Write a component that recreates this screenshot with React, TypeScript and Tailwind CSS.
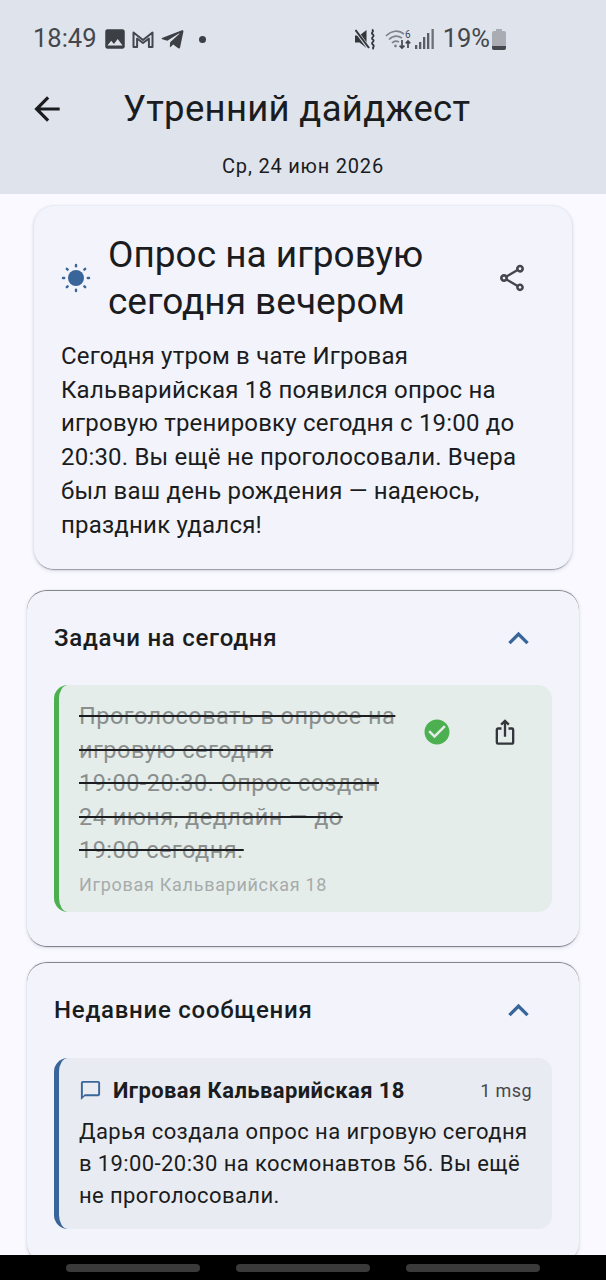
import React from "react";
import { MdArrowBack, MdOutlineShare, MdExpandLess, MdCheckCircle, MdOutlineChatBubbleOutline, MdIosShare, MdImage } from "react-icons/md";
import { FaTelegramPlane } from "react-icons/fa";

function Sun() {
  const dots = [0, 45, 90, 135, 180, 225, 270, 315];
  return (
    <svg width="30" height="30" viewBox="0 0 30 30" className="shrink-0">
      <circle cx="15" cy="15" r="8" fill="#38659a" />
      {dots.map((d) => (
        <rect key={d} x="13.8" y="0.8" width="2.4" height="3.6" rx="1.2" fill="#38659a" transform={`rotate(${d} 15 15)`} />
      ))}
    </svg>
  );
}

function StatusLeft() {
  return (
    <div className="flex items-center">
      <span className="text-[25.5px] leading-none text-[#44474c]">18:49</span>
      <MdImage className="ml-[5px] text-[#3c3f44]" size={26} />
      <svg width="22" height="19" viewBox="0 0 22 19" className="ml-[4px]" fill="none" stroke="#44474c" strokeWidth="2" strokeLinejoin="round">
        <path d="M1.5 17V2.5l9.5 7.5 9.5-7.5V17h-3.6V8.5L11 13 5.1 8.5V17z" />
      </svg>
      <FaTelegramPlane className="ml-[6px] text-[#3c3f44]" size={25} />
      <span className="ml-[14px] w-[7px] h-[7px] rounded-full bg-[#3c3f44]" />
    </div>
  );
}

function StatusRight() {
  return (
    <div className="flex items-center">
      <svg width="21" height="22" viewBox="0 0 21 22" fill="none">
        <path d="M0 7.5h4.5L11.5 2v18l-7-5.5H0z" fill="#33363b" />
        <path d="M0 1.5 14 20.5" stroke="#dfe3ec" strokeWidth="3.5" />
        <path d="M0.5 2 14 20" stroke="#33363b" strokeWidth="2" />
        <path d="M17 1.5c3 2-2 3 .8 5s-2.8 3 0 5-2.8 3 0 5-1.5 3.5 1 4.5" stroke="#33363b" strokeWidth="1.8" />
      </svg>
      <svg width="28" height="22" viewBox="0 0 28 22" fill="none" className="ml-[9px]" stroke="#7f8288" strokeWidth="1.7">
        <path d="M1 8c6-6 13-6 18-2" />
        <path d="M4 11.5c4-4 9-4 13-1.5" />
        <path d="M7 15c2-2 5-2 7-1" />
        <circle cx="10.5" cy="18" r="1.4" fill="#7f8288" stroke="none" />
        <path d="M17 12v8m-2.4-2.4L17 20l2.4-2.4" stroke="#44474c" />
        <path d="M23 20v-7m-2.2 2.3L23 13l2.2 2.3" stroke="#44474c" />
        <text x="20" y="9.5" fontSize="10" fill="#44474c" stroke="none" fontFamily="Roboto, sans-serif">6</text>
      </svg>
      <svg width="19" height="22" viewBox="0 0 19 22" className="ml-[2px]" fill="#5a5d63">
        <rect x="0" y="17" width="2.3" height="4" />
        <rect x="4" y="14" width="2.3" height="7" />
        <rect x="8" y="9" width="2.3" height="12" />
        <rect x="12" y="5" width="2.3" height="16" />
        <rect x="16.5" y="1" width="2.3" height="20" fill="#6e7177" />
      </svg>
      <span className="ml-[9px] text-[25.5px] leading-none text-[#44474c]">19%</span>
      <svg width="14" height="22" viewBox="0 0 14 22" className="ml-[2px]">
        <path d="M4 1h6v2h2a2 2 0 0 1 2 2v15a2 2 0 0 1-2 2H2a2 2 0 0 1-2-2V5a2 2 0 0 1 2-2h2z" fill="#a9acb3" />
        <path d="M0 18h14v2a2 2 0 0 1-2 2H2a2 2 0 0 1-2-2z" fill="#44474c" />
      </svg>
    </div>
  );
}

function SectionCard({ title, children }: { title: string; children: React.ReactNode }) {
  return (
    <section className="mx-[27px] rounded-[20px] bg-[#f2f3fb] border-t border-t-[#85868c] shadow-[0_2px_1px_-1px_rgba(50,50,70,0.6),0_0_2px_rgba(50,50,70,0.14),0_2px_4px_rgba(50,50,70,0.12)] pb-[34px] px-[27px]">
      <div className="h-[94px] flex items-center justify-between">
        <h2 className="text-[24px] font-medium tracking-[0.75px] text-[#1a1c20]">{title}</h2>
        <MdExpandLess size={41} className="text-[#38659a] mr-[13px] mt-[1px]" />
      </div>
      {children}
    </section>
  );
}

export default function App() {
  return (
    <div className="w-[606px] h-[1280px] flex flex-col overflow-hidden bg-[#f9f9ff] font-['Roboto',sans-serif]">
      <header className="h-[194px] shrink-0 bg-[#dfe3ec] flex flex-col">
        <div className="h-[78px] pl-[33px] pr-[100px] flex items-center justify-between">
          <StatusLeft />
          <StatusRight />
        </div>
        <div className="h-[62px] flex items-center pl-[28px]">
          <MdArrowBack size={38} className="text-[#1a1c20]" />
          <h1 className="ml-[57px] text-[36.5px] leading-none tracking-[0.3px] text-[#1a1c20]">Утренний дайджест</h1>
        </div>
        <div className="mt-[12px] text-center text-[20px] leading-[28px] tracking-[0.8px] text-[#1a1c20]">Ср, 24 июн 2026</div>
      </header>

      <main className="flex-1 min-h-0 overflow-hidden flex flex-col pt-[12px]">
        <section className="mx-[34px] rounded-[20px] bg-[#f2f3fb] shadow-[0_2px_1px_-1px_rgba(50,50,70,0.4),0_0_3px_rgba(50,50,70,0.14),0_2px_4px_rgba(50,50,70,0.12)] px-[27px] pt-[25px] h-[363px] shrink-0">
          <div className="flex items-center">
            <Sun />
            <h2 className="ml-[17px] w-[360px] text-[37px] leading-[47px] text-[#1a1c20]">Опрос на игровую сегодня вечером</h2>
            <MdOutlineShare size={32} className="ml-[28px] text-[#44474c]" />
          </div>
          <p className="mt-[15px] text-[24px] leading-[33.7px] tracking-[0.2px] text-[#1a1c20]">
            Сегодня утром в чате Игровая<br />
            Кальварийская 18 появился опрос на<br />
            игровую тренировку сегодня с 19:00 до<br />
            20:30. Вы ещё не проголосовали. Вчера<br />
            был ваш день рождения — надеюсь,<br />
            праздник удался!
          </p>
        </section>

        <div className="mt-[21px] shrink-0">
          <SectionCard title="Задачи на сегодня">
            <div className="rounded-[14px] border-l-[5px] border-l-[#4caf50] bg-[#e5edea] h-[227px] pl-[20px] pr-[28px] pt-[15px] flex">
              <div className="w-[329px]">
                <p className="text-[23.5px] leading-[33.5px] tracking-[0.47px] line-through decoration-[#1a1c20] text-[#8a8f8e]">
                  Проголосовать в опросе на<br />игровую сегодня<br />19:00-20:30. Опрос создан<br />24 июня, дедлайн — до<br />19:00 сегодня.
                </p>
                <p className="mt-[4px] text-[18px] leading-[26px] tracking-[0.7px] text-[#a6abaa]">Игровая Кальварийская 18</p>
              </div>
              <MdCheckCircle size={30} className="ml-[14px] mt-[17px] text-[#4caf50] shrink-0" />
              <MdIosShare size={28} className="ml-[39px] mt-[18px] text-[#33363b] shrink-0" />
            </div>
          </SectionCard>
        </div>

        <div className="mt-[16px] shrink-0">
          <SectionCard title="Недавние сообщения">
            <div className="mt-[1px] rounded-[14px] border-l-[5px] border-l-[#38659a] bg-[#e9ebf2] h-[171px] pl-[20px] pr-[20px] pt-[18px]">
              <div className="flex items-center h-[28px]">
                <MdOutlineChatBubbleOutline size={23} className="text-[#38659a] shrink-0" />
                <span className="ml-[11px] text-[22px] font-bold tracking-[0.4px] text-[#1a1c20]">Игровая Кальварийская 18</span>
                <span className="ml-auto text-[18px] tracking-[0.4px] text-[#44474c]">1 msg</span>
              </div>
              <p className="mt-[12px] text-[22px] leading-[32px] tracking-[0.4px] text-[#1a1c20]">
                Дарья создала опрос на игровую сегодня<br />в 19:00-20:30 на космонавтов 56. Вы ещё<br />не проголосовали.
              </p>
            </div>
          </SectionCard>
        </div>
      </main>

      <footer className="h-[25px] shrink-0 bg-black flex items-center justify-center gap-[36px] relative z-10">
        <span className="w-[134px] h-[8px] rounded-full bg-[#3a3a3a]" />
        <span className="w-[134px] h-[8px] rounded-full bg-[#3a3a3a]" />
        <span className="w-[134px] h-[8px] rounded-full bg-[#3a3a3a]" />
      </footer>
    </div>
  );
}
